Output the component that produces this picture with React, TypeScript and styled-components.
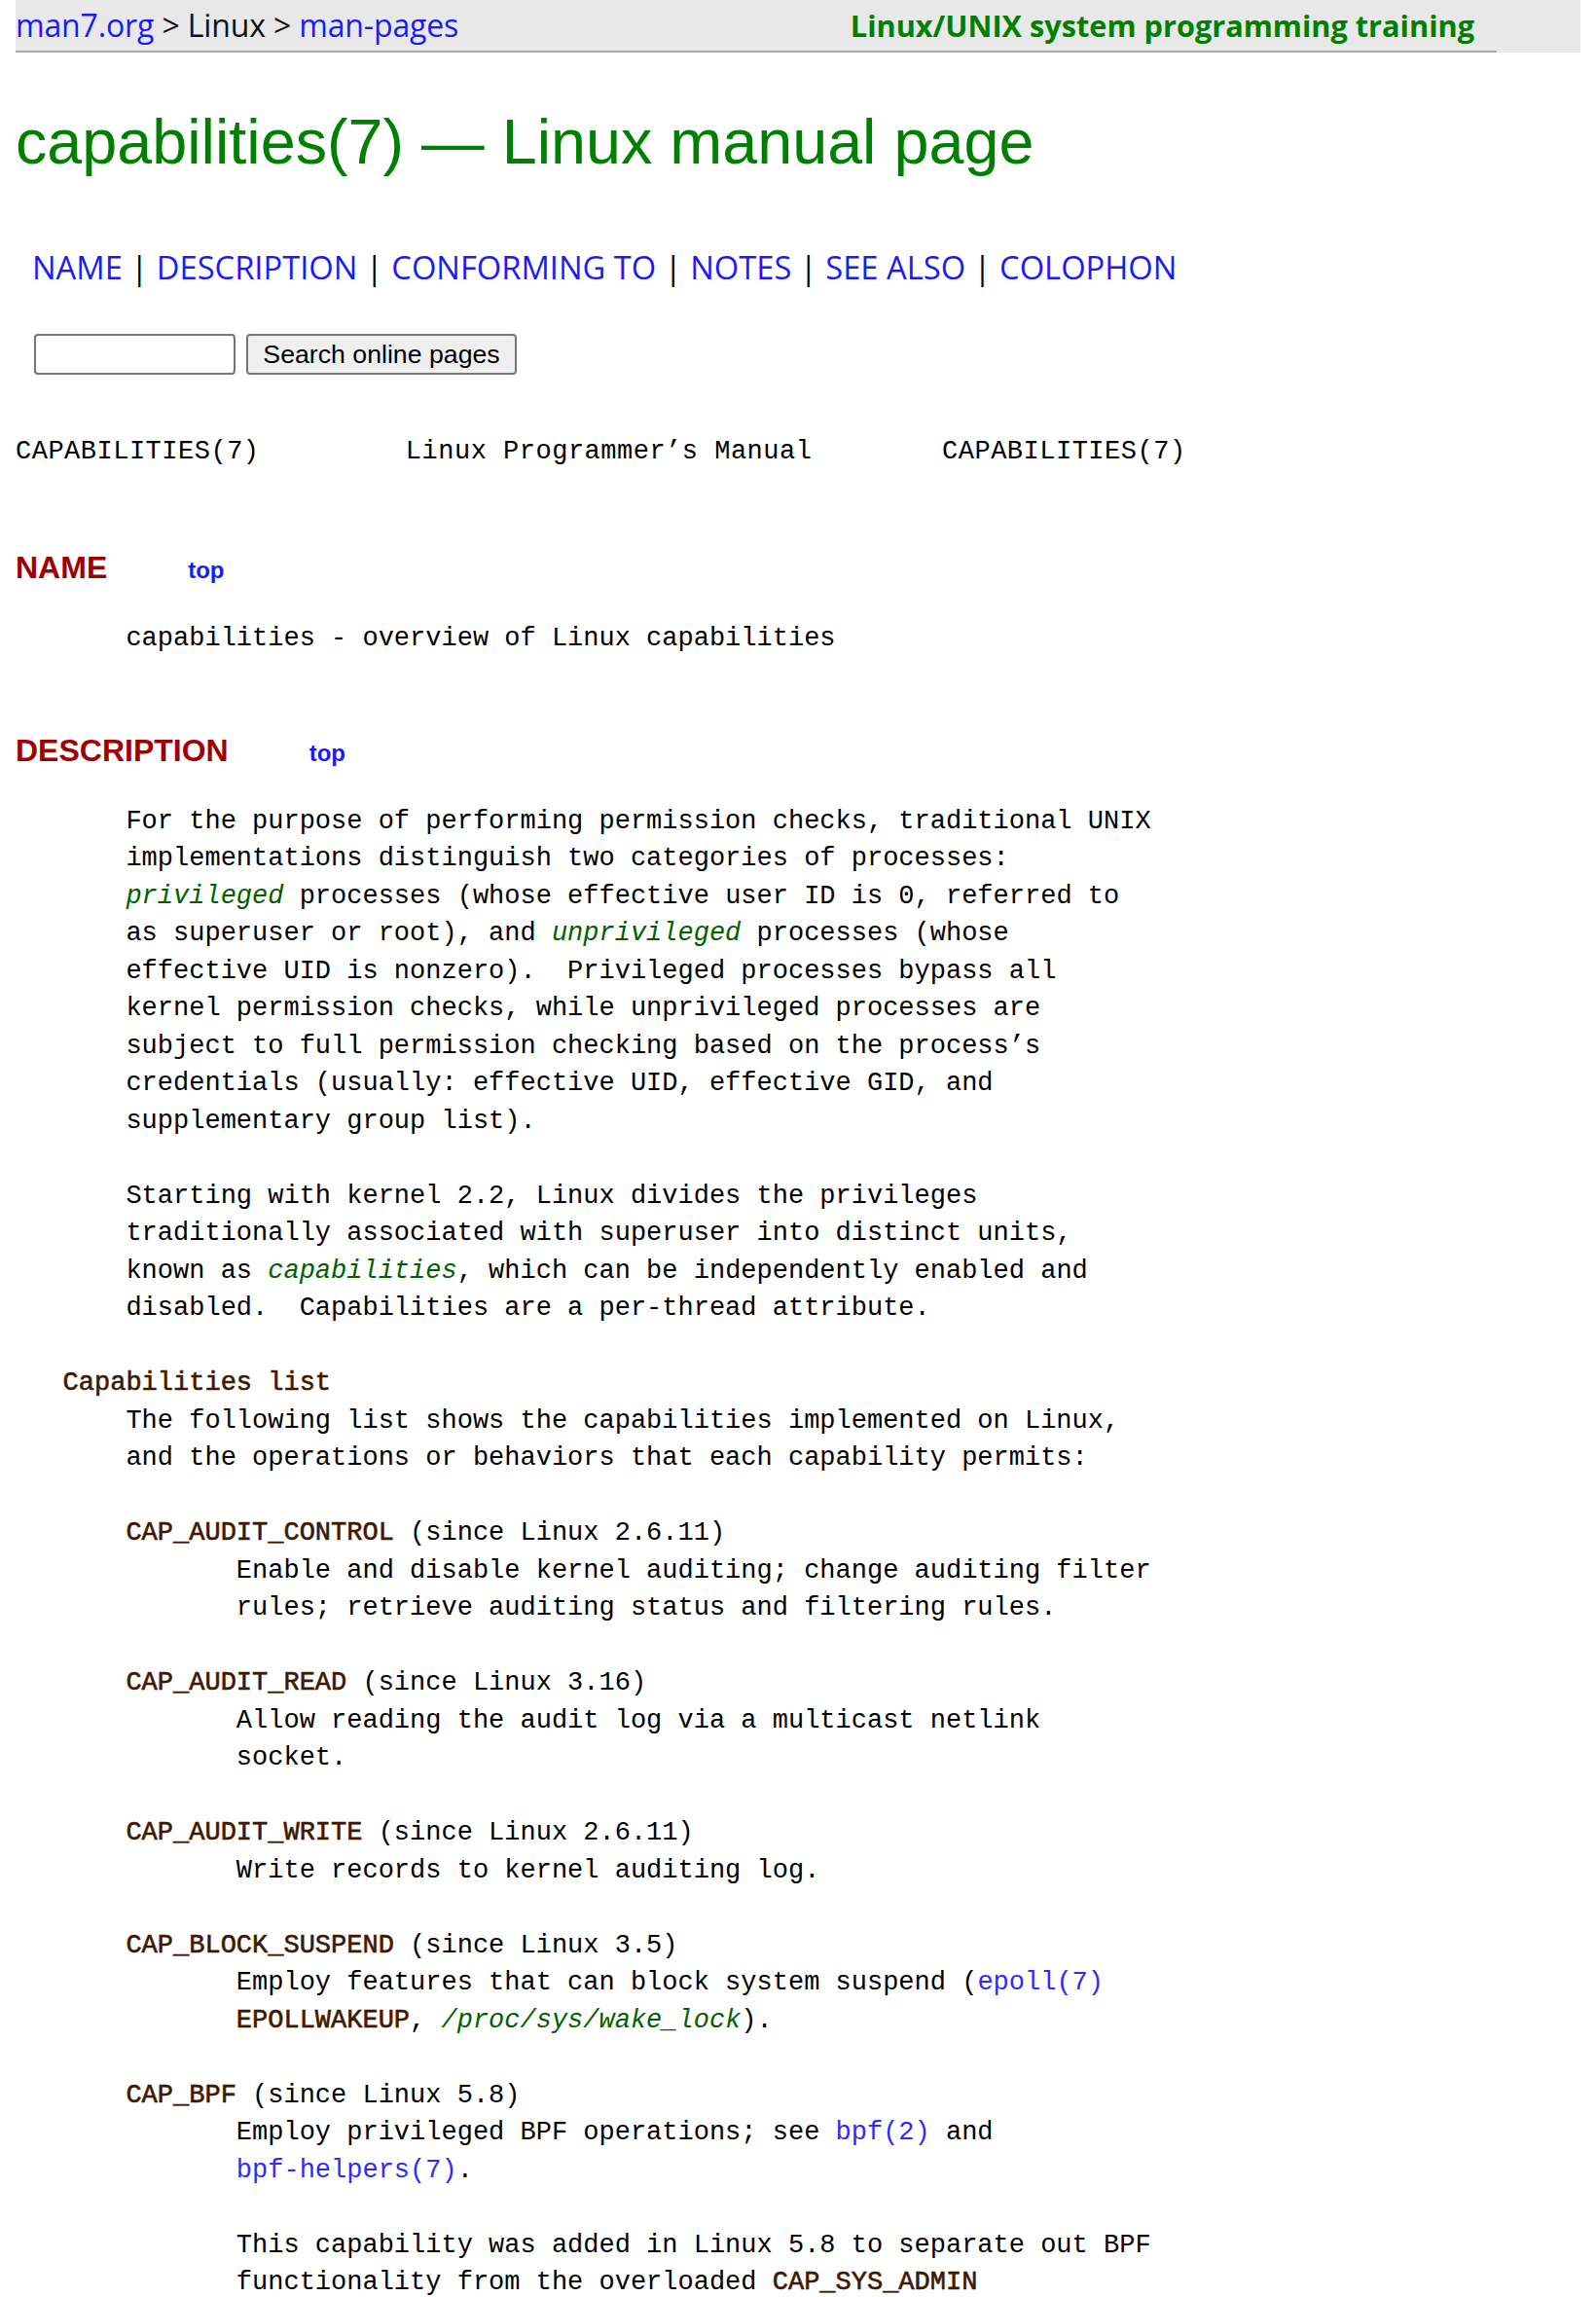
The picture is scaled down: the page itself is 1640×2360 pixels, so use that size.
import React from "react";
import styled, { createGlobalStyle } from "styled-components";

const GlobalStyle = createGlobalStyle`
  html, body {
    background: #ffffff;
  }
  body {
    margin: 0 16px 16px;
    color: #000000;
    font-family: "Liberation Serif", serif;
  }
`;

const TopBar = styled.div`
  margin: 0 -16px;
  padding: 0 16px;
  background: #e8e8e8;
`;

const TopBarInner = styled.div`
  box-sizing: border-box;
  width: 1522px;
  height: 54px;
  padding-right: 23px;
  border-bottom: 2px solid #ababab;
  display: flex;
  align-items: center;
  justify-content: space-between;
  font-family: "Open Sans", sans-serif;
  line-height: 52px;
  color: #111111;
`;

const Crumbs = styled.span`
  font-size: 32px;
  letter-spacing: -0.15px;
`;

const CrumbLink = styled.a`
  color: #1a1aff;
  text-decoration: none;
`;

const Training = styled.a`
  font-size: 30.7px;
  color: #008000;
  font-weight: 700;
  text-decoration: none;
`;

const Title = styled.h1`
  margin: 55px 0 0;
  font-family: "Liberation Sans", Arial, sans-serif;
  font-size: 64.7px;
  line-height: 74px;
  font-weight: 400;
  color: #008000;
`;

const Nav = styled.div`
  margin-top: 68px;
  padding-left: 17px;
  font-family: "Open Sans", sans-serif;
  font-size: 32.7px;
  line-height: 48px;
  color: #000000;
  white-space: pre;
`;

const NavLink = styled.a`
  color: #1a1aff;
  text-decoration: none;
`;

const SearchRow = styled.form`
  margin: 44px 0 0;
  padding-left: 19px;
  display: flex;
  gap: 11px;
`;

const SearchInput = styled.input`
  box-sizing: border-box;
  width: 207px;
  height: 42px;
  border: 2px solid #767676;
  border-radius: 4px;
  background: #ffffff;
`;

const SearchButton = styled.button`
  box-sizing: border-box;
  width: 278px;
  height: 42px;
  border: 2px solid #767676;
  border-radius: 4px;
  background: #efefef;
  font-family: "Liberation Sans", Arial, sans-serif;
  font-size: 26.7px;
  color: #000000;
  padding: 0;
`;

const Pre = styled.pre<{ $top: number; $spacing?: number }>`
  margin: ${({ $top }) => $top}px 0 0;
  font-family: "Liberation Mono", monospace;
  font-size: 27px;
  line-height: 38.5px;
  letter-spacing: ${({ $spacing = 0 }) => $spacing}px;
  color: #000000;
  white-space: pre;
`;

const Heading = styled.h2<{ $top: number }>`
  margin: ${({ $top }) => $top}px 0 0;
  font-family: "Liberation Sans", Arial, sans-serif;
  font-size: 32px;
  line-height: 38px;
  font-weight: 700;
  color: #a00000;
`;

const TopLink = styled.a`
  margin-left: 83px;
  font-size: 24px;
  color: #1a1aff;
  text-decoration: none;
`;

const B = styled.b`
  color: #401800;
  font-weight: 400;
  -webkit-text-stroke: 0.6px #401800;
`;

const I = styled.i`
  color: #006000;
`;

const ManLink = styled.a`
  color: #2b2bff;
  text-decoration: none;
`;

const navItems = [
  "NAME",
  "DESCRIPTION",
  "CONFORMING TO",
  "NOTES",
  "SEE ALSO",
  "COLOPHON",
];

const headline =
  "CAPABILITIES(7)" +
  " ".repeat(9) +
  "Linux Programmer’s Manual" +
  " ".repeat(8) +
  "CAPABILITIES(7)";

function App() {
  return (
    <>
      <GlobalStyle />
      <TopBar>
        <TopBarInner>
          <Crumbs>
            <CrumbLink href="#">man7.org</CrumbLink> &gt; Linux &gt;{" "}
            <CrumbLink href="#">man-pages</CrumbLink>
          </Crumbs>
          <Training href="#">Linux/UNIX system programming training</Training>
        </TopBarInner>
      </TopBar>

      <Title>capabilities(7) — Linux manual page</Title>

      <Nav>
        {navItems.map((item, index) => (
          <React.Fragment key={item}>
            {index > 0 && " | "}
            <NavLink href="#">{item}</NavLink>
          </React.Fragment>
        ))}
      </Nav>

      <SearchRow onSubmit={(e) => e.preventDefault()}>
        <SearchInput type="text" />
        <SearchButton type="submit">Search online pages</SearchButton>
      </SearchRow>

      <Pre $top={60} $spacing={0.5}>
        {headline}
      </Pre>

      <Heading $top={80}>
        NAME<TopLink href="#">top</TopLink>
      </Heading>
      <Pre $top={32}>
        {"       capabilities - overview of Linux capabilities"}
      </Pre>

      <Heading $top={76.5}>
        DESCRIPTION<TopLink href="#">top</TopLink>
      </Heading>
      <Pre $top={32}>
        {`       For the purpose of performing permission checks, traditional UNIX
       implementations distinguish two categories of processes:
       `}
        <I>privileged</I>
        {` processes (whose effective user ID is 0, referred to
       as superuser or root), and `}
        <I>unprivileged</I>
        {` processes (whose
       effective UID is nonzero).  Privileged processes bypass all
       kernel permission checks, while unprivileged processes are
       subject to full permission checking based on the process’s
       credentials (usually: effective UID, effective GID, and
       supplementary group list).

       Starting with kernel 2.2, Linux divides the privileges
       traditionally associated with superuser into distinct units,
       known as `}
        <I>capabilities</I>
        {`, which can be independently enabled and
       disabled.  Capabilities are a per-thread attribute.

   `}
        <B>Capabilities list</B>
        {`
       The following list shows the capabilities implemented on Linux,
       and the operations or behaviors that each capability permits:

       `}
        <B>CAP_AUDIT_CONTROL</B>
        {` (since Linux 2.6.11)
              Enable and disable kernel auditing; change auditing filter
              rules; retrieve auditing status and filtering rules.

       `}
        <B>CAP_AUDIT_READ</B>
        {` (since Linux 3.16)
              Allow reading the audit log via a multicast netlink
              socket.

       `}
        <B>CAP_AUDIT_WRITE</B>
        {` (since Linux 2.6.11)
              Write records to kernel auditing log.

       `}
        <B>CAP_BLOCK_SUSPEND</B>
        {` (since Linux 3.5)
              Employ features that can block system suspend (`}
        <ManLink href="#">epoll(7)</ManLink>
        {`
              `}
        <B>EPOLLWAKEUP</B>
        {`, `}
        <I>/proc/sys/wake_lock</I>
        {`).

       `}
        <B>CAP_BPF</B>
        {` (since Linux 5.8)
              Employ privileged BPF operations; see `}
        <ManLink href="#">bpf(2)</ManLink>
        {` and
              `}
        <ManLink href="#">bpf-helpers(7)</ManLink>
        {`.

              This capability was added in Linux 5.8 to separate out BPF
              functionality from the overloaded `}
        <B>CAP_SYS_ADMIN</B>
        {`
              capability.`}
      </Pre>
    </>
  );
}

export default App;
